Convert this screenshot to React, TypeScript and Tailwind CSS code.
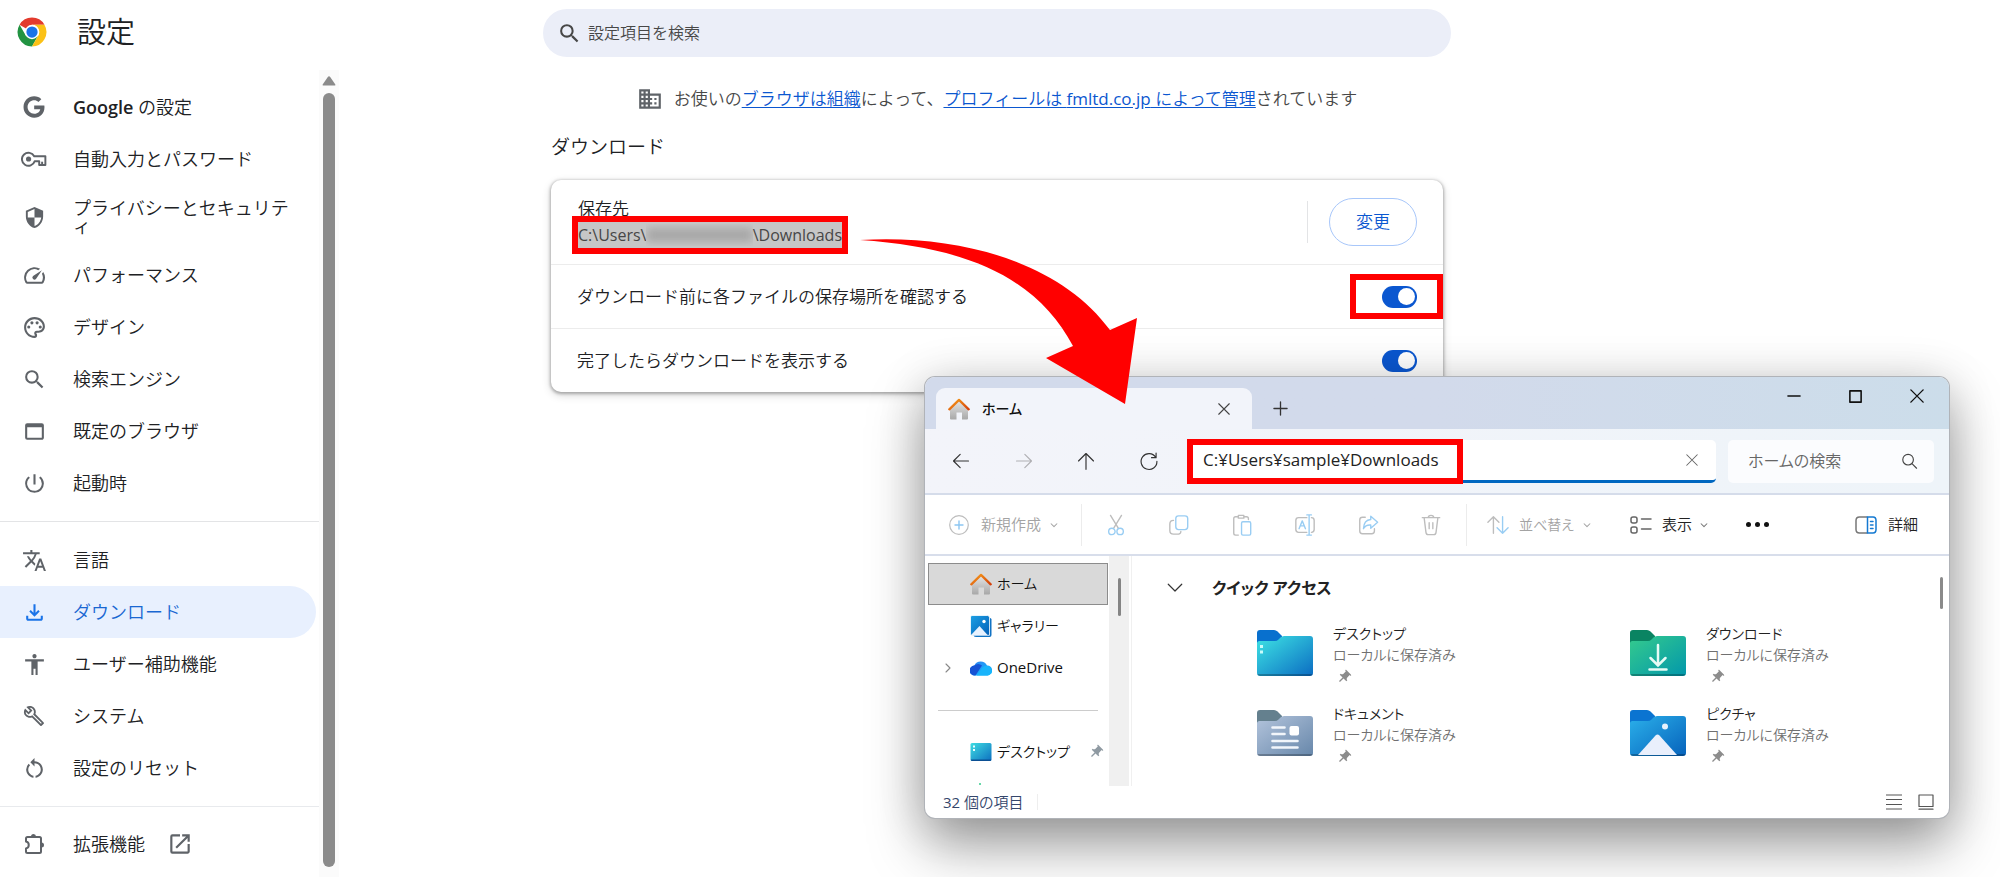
import React from "react";
import { FaGoogle } from "react-icons/fa";
import {
  MdAccessibility,
  MdBusiness,
  MdOpenInNew,
  MdOutlineBuild,
  MdOutlineFileDownload,
  MdOutlinePalette,
  MdOutlineSpeed,
  MdPowerSettingsNew,
  MdPushPin,
  MdRestartAlt,
  MdSearch,
  MdSecurity,
  MdTranslate,
  MdWebAsset,
} from "react-icons/md";

type Node = React.ReactNode;

function ChromeLogo() {
  return (
    <svg viewBox="0 0 48 48" className="size-[30px]" aria-hidden="true">
      <path d="M24 24 4.08 12.5A23 23 0 0 1 43.92 12.5H24Z" fill="#e33b2e" />
      <path d="M4.08 12.5A23 23 0 0 0 24 47L33.96 29.75 24 24 14.04 29.75Z" fill="#229342" />
      <path d="M43.92 12.5A23 23 0 0 1 24 47L33.96 29.75A11.5 11.5 0 0 0 24 12.5Z" fill="#fbc116" />
      <circle cx="24" cy="24" r="11.5" fill="#fff" />
      <circle cx="24" cy="24" r="9" fill="#1a73e8" />
    </svg>
  );
}

function ExtensionIcon() {
  return (
    <svg viewBox="0 0 24 24" className="size-6" aria-hidden="true">
      <path
        d="M4 6.5Q4 5 5.5 5H17.5Q19 5 19 6.5V19.5Q19 21 17.5 21H5.5Q4 21 4 19.5V16.5A3.6 3.6 0 0 0 4 9.5Z"
        fill="none"
        stroke="currentColor"
        strokeWidth="2"
        strokeLinejoin="round"
      />
      <path d="M9 4.5A2.5 2.5 0 0 1 14 4.5ZM19.5 10.5A2.5 2.5 0 0 1 19.5 15.5Z" fill="currentColor" />
    </svg>
  );
}

function KeyIcon() {
  return (
    <svg viewBox="0 0 24 24" className="size-[26px]" fill="none" stroke="currentColor" strokeWidth="1.8" strokeLinejoin="round" aria-hidden="true">
      <path d="M12.2 9.5H22.5V17.5H16.8V14H12.6A6 6 0 1 1 12.2 9.5Z" />
      <circle cx="7" cy="12" r="2.4" fill="currentColor" stroke="none" />
      <path d="M19.5 17.5V14.5" />
    </svg>
  );
}

function NavItem({ icon, children, active = false, trailing, tall = false }: { icon: Node; children: Node; active?: boolean; trailing?: Node; tall?: boolean }) {
  return (
    <a
      href="#"
      aria-current={active ? "page" : undefined}
      className={
        "flex items-center gap-[26px] pl-[21px] pr-5 mr-[3px] rounded-r-full text-lg leading-[18px] " +
        (tall ? "h-16 " : "h-[52px] ") +
        (active ? "bg-[#e8f0fe] text-[#1967d2]" : "text-[#202124]")
      }
    >
      <span className={"flex size-[26px] shrink-0 items-center justify-center text-[25px] " + (active ? "text-[#1a73e8]" : "text-[#5f6368]")}>{icon}</span>
      <span className="break-all">{children}</span>
      {trailing}
    </a>
  );
}

function Sidebar() {
  return (
    <aside className="flex w-[339px] shrink-0 flex-col">
      <header className="flex h-[70px] items-center gap-[30px] pb-[6px] pl-[17px]">
        <ChromeLogo />
        <h1 className="text-[29px] leading-8 text-[#202124]">設定</h1>
      </header>
      <div className="flex">
        <nav className="flex w-[319px] flex-col pt-[11px] pb-2">
          <NavItem icon={<FaGoogle className="size-[22px]" />}>
            <span className="font-semibold">Google</span> の設定
          </NavItem>
          <NavItem icon={<KeyIcon />}>自動入力とパスワード</NavItem>
          <NavItem icon={<MdSecurity className="size-[23px]" />} tall>
            プライバシーとセキュリティ
          </NavItem>
          <NavItem icon={<MdOutlineSpeed />}>パフォーマンス</NavItem>
          <NavItem icon={<MdOutlinePalette />}>デザイン</NavItem>
          <NavItem icon={<MdSearch />}>検索エンジン</NavItem>
          <NavItem icon={<MdWebAsset />}>既定のブラウザ</NavItem>
          <NavItem icon={<MdPowerSettingsNew />}>起動時</NavItem>
          <hr className="my-3 border-[#e3e4e6]" />
          <NavItem icon={<MdTranslate />}>言語</NavItem>
          <NavItem icon={<MdOutlineFileDownload />} active>
            ダウンロード
          </NavItem>
          <NavItem icon={<MdAccessibility />}>ユーザー補助機能</NavItem>
          <NavItem icon={<MdOutlineBuild className="size-[22px]" />}>システム</NavItem>
          <NavItem icon={<MdRestartAlt />}>設定のリセット</NavItem>
          <hr className="mt-3 mb-[11px] border-[#e8eaed]" />
          <NavItem icon={<ExtensionIcon />} trailing={<MdOpenInNew className="-ml-[4px] size-[26px] text-[#5f6368]" />}>
            拡張機能
          </NavItem>
        </nav>
        <div className="flex w-5 flex-col items-center bg-[#fbfbfb] pt-[6px] pb-[11px]">
          <svg viewBox="0 0 14 10" className="mb-[7px] h-[10px] w-[14px]" aria-hidden="true">
            <path d="M1.5 9.5H12.5Q14 9.5 13 8L8.2 1Q7 -.5 5.8 1L1 8Q0 9.5 1.5 9.5Z" fill="#8b8b8b" />
          </svg>
          <div className="w-3 grow rounded-full bg-[#8b8b8b]" />
        </div>
      </div>
    </aside>
  );
}

function Toggle({ label }: { label: string }) {
  return (
    <label className="flex cursor-pointer">
      <input type="checkbox" role="switch" defaultChecked aria-label={label} className="peer sr-only" />
      <span className="flex h-[22px] w-[35px] items-center justify-end rounded-full bg-[#0b57d0] pr-[2px]">
        <span className="size-[17px] rounded-full bg-white" />
      </span>
    </label>
  );
}

function SettingsMain() {
  return (
    <main className="min-w-0 grow pt-[9px] pl-[204px]">
      <div className="w-full max-w-[908px]">
        <label className="flex h-12 items-center gap-[6px] rounded-full bg-[#ebeef8] px-[14px]">
          <MdSearch className="size-[25px] text-[#474747]" />
          <input
            type="search"
            aria-label="設定項目を検索"
            placeholder="設定項目を検索"
            className="grow bg-transparent text-base leading-6 outline-none placeholder:text-[#474747]"
          />
        </label>
        <p className="mt-[29px] flex items-center justify-center gap-[11px] text-[17px] leading-[26px] text-[#474747]">
          <MdBusiness className="size-[26px] shrink-0 text-[#5f6368]" />
          <span>
            お使いの
            <a href="#" className="text-[#0b57d0] underline underline-offset-2">ブラウザは組織</a>
            によって、
            <a href="#" className="text-[#0b57d0] underline underline-offset-2">
              プロフィールは <span className="font-normal">fmltd.co.jp</span> によって管理
            </a>
            されています
          </span>
        </p>
        <h2 className="mt-5 ml-2 text-[19px] leading-[30px] text-[#202124]">ダウンロード</h2>
        <section className="mx-2 mt-[18px] rounded-[10px] bg-white text-[17px] text-[#202124] shadow-[0_1px_3px_1px_rgba(0,0,0,0.26),0_3px_10px_rgba(0,0,0,0.16)]">
          <div className="flex h-[84px] items-center justify-between pr-[26px] pl-[27px]">
            <div className="flex flex-col">
              <span className="leading-[26px]">保存先</span>
              <div className="relative flex h-[26px] w-[264px] items-center bg-[#c6c6c6] text-[16px] leading-6 font-normal text-[#474747]">
                <span>C:\Users\</span>
                <span className="h-[22px] grow overflow-hidden bg-[#c9c9c9]">
                  <span className="mt-1 block h-[14px] bg-[#a6a6a6] blur-[5px]" />
                </span>
                <span>\Downloads</span>
                <span className="pointer-events-none absolute -inset-[6px] border-[6px] border-[#f00]" />
              </div>
            </div>
            <div className="flex items-center gap-[21px]">
              <span className="h-[42px] w-px bg-[#e3e4e6]" />
              <button className="h-12 w-[88px] rounded-full border border-[#a8c7fa] text-[17px] text-[#0b57d0]">変更</button>
            </div>
          </div>
          <div className="relative flex h-16 items-center justify-between border-t border-[#ececec] px-[26px]">
            <span>ダウンロード前に各ファイルの保存場所を確認する</span>
            <Toggle label="ダウンロード前に各ファイルの保存場所を確認する" />
            <span className="pointer-events-none absolute top-[9px] right-0 h-[45px] w-[93px] border-[6px] border-[#f00]" />
          </div>
          <div className="flex h-16 items-center justify-between border-t border-[#ececec] px-[26px]">
            <span>完了したらダウンロードを表示する</span>
            <Toggle label="完了したらダウンロードを表示する" />
          </div>
        </section>
      </div>
    </main>
  );
}

/* ---------- Explorer icons ---------- */

function Line({ d, className = "", w = 1.2, box = 24 }: { d: string; className?: string; w?: number; box?: number }) {
  return (
    <svg viewBox={`0 0 ${box} ${box}`} className={"shrink-0 " + className} fill="none" stroke="currentColor" strokeWidth={w} strokeLinecap="round" strokeLinejoin="round" aria-hidden="true">
      <path d={d} />
    </svg>
  );
}

function TwoTone({ gray, blue }: { gray: string; blue: string }) {
  return (
    <svg viewBox="0 0 24 24" className="size-[22px]" fill="none" strokeWidth="1.5" strokeLinecap="round" strokeLinejoin="round" aria-hidden="true">
      <path d={gray} stroke="#bdbdbd" />
      <path d={blue} stroke="#99cdf3" />
    </svg>
  );
}

function HouseIcon() {
  return (
    <svg viewBox="0 0 22 22" className="size-[22px] shrink-0" aria-hidden="true">
      <defs>
        <linearGradient id="wall" x1="0" y1="0" x2="0" y2="1">
          <stop offset="0" stopColor="#e6e6e6" />
          <stop offset="1" stopColor="#a8a8a8" />
        </linearGradient>
        <linearGradient id="roof" x1="0" y1="0" x2="1" y2="1">
          <stop offset="0" stopColor="#f7a01c" />
          <stop offset="1" stopColor="#d43f0b" />
        </linearGradient>
      </defs>
      <path d="M2 11 11 2.5 20 11V20.5Q20 21.5 19 21.5H14V14.5H8.5V21.5H3Q2 21.5 2 20.5Z" fill="url(#wall)" />
      <path d="M1.3 11.3 11 1.9 20.7 11.3" fill="none" stroke="url(#roof)" strokeWidth="2.3" strokeLinecap="round" strokeLinejoin="round" />
    </svg>
  );
}

function GalleryIcon() {
  return (
    <svg viewBox="0 0 22 22" className="size-[22px] shrink-0" aria-hidden="true">
      <defs>
        <linearGradient id="gal" x1="0" y1="0" x2="1" y2="1">
          <stop offset="0" stopColor="#1ca0e4" />
          <stop offset="1" stopColor="#0460b8" />
        </linearGradient>
      </defs>
      <path d="M4 3H20Q21.5 3 21.5 4.5V20Q21.5 22 19.5 22H6Q3.5 22 3.5 20Z" fill="#1273c4" />
      <path d="M2 .5H17.5Q19.5 .5 19.5 2.5V20.3H2Q.5 20.3 .5 19V2Q.5 .5 2 .5Z" fill="url(#gal)" stroke="#fff" strokeWidth=".8" />
      <circle cx="14" cy="6.5" r="1.7" fill="#fff" />
      <path d="M1.5 19.5 9.5 11 17.5 20H2Z" fill="#e8f2ff" />
    </svg>
  );
}

function CloudIcon() {
  return (
    <svg viewBox="0 0 22 16" className="h-4 w-[22px] shrink-0" aria-hidden="true">
      <defs>
        <linearGradient id="cl" x1="0" y1="0" x2="1" y2="1">
          <stop offset="0" stopColor="#2f7df0" />
          <stop offset="1" stopColor="#0dc0ff" />
        </linearGradient>
      </defs>
      <path d="M5 15.5A5 5 0 0 1 4.3 5.5 7 7 0 0 1 17 5.5 5 5 0 0 1 17.5 15.5Z" fill="url(#cl)" />
      <path d="M5 15.5A5 5 0 0 1 4.3 5.5 6 6 0 0 1 12 5.5L5.5 15.5Z" fill="#1653d4" />
      <path d="M6.5 15.5 12.5 7.5Q15 5 18 6A5 5 0 0 1 17.5 15.5Z" fill="#19b4fb" />
    </svg>
  );
}

function MiniDesktopIcon() {
  return (
    <svg viewBox="0 0 22 18" className="h-[18px] w-[22px] shrink-0" aria-hidden="true">
      <defs>
        <linearGradient id="mini" x1="0" y1="0" x2="1" y2="1">
          <stop offset="0" stopColor="#3fdde2" />
          <stop offset="1" stopColor="#0d6fc0" />
        </linearGradient>
      </defs>
      <rect x=".5" width="21" height="18" rx="1.5" fill="url(#mini)" />
      <path d="M1 16.5H21V17Q21 18 20 18H2Q1 18 1 17Z" fill="#0b4f93" />
      <path d="M3 2.5h2v2h-2zM3 6h2v2h-2z" fill="#e9ffff" />
    </svg>
  );
}

function FolderIcon({ id, tab, from, to, children }: { id: string; tab: string; from: string; to: string; children: Node }) {
  return (
    <svg viewBox="0 0 56 46" className="h-[46px] w-14 shrink-0" aria-hidden="true">
      <defs>
        <linearGradient id={id} x1="0" y1="0" x2="1" y2="1">
          <stop offset="0" stopColor={from} />
          <stop offset="1" stopColor={to} />
        </linearGradient>
      </defs>
      <path d="M0 3Q0 0 3 0H17Q19 0 20.5 1.5L25 6V14H0Z" fill={tab} />
      <path d="M0 13.5Q0 11 2.5 11H18Q20 11 21.5 9.5L23.5 7.5Q25 6 27 6H53Q56 6 56 9V43Q56 46 53 46H3Q0 46 0 43Z" fill={`url(#${id})`} />
      <path d="M.5 44Q1 46 3 46H53Q55 46 55.5 44Z" fill="#000" opacity=".25" />
      {children}
    </svg>
  );
}

const folders = [
  {
    name: "デスクトップ",
    icon: (
      <FolderIcon id="fd" tab="#0870ce" from="#3ee4e4" to="#0b6cc2">
        <path d="M3 15h3v3h-3zM3 20.5h3v3h-3z" fill="#c9fbfb" />
      </FolderIcon>
    ),
  },
  {
    name: "ダウンロード",
    icon: (
      <FolderIcon id="fw" tab="#0a8462" from="#35cb8d" to="#0297ab">
        <path d="M28 15V35M20.5 28 28 35.5 35.5 28M19.5 39.5H36.5" fill="none" stroke="#e6fbf5" strokeWidth="2.5" strokeLinecap="round" />
      </FolderIcon>
    ),
  },
  {
    name: "ドキュメント",
    icon: (
      <FolderIcon id="fo" tab="#64808e" from="#b3c4dc" to="#6787aa">
        <path d="M15.5 17.5H27.5M15.5 24H27.5M15.5 31H40.5M15.5 37.5H40.5" stroke="#f2f6fb" strokeWidth="2.6" strokeLinecap="round" />
        <rect x="32.5" y="16" width="9.5" height="9.5" rx="2" fill="#fff" />
      </FolderIcon>
    ),
  },
  {
    name: "ピクチャ",
    icon: (
      <FolderIcon id="fp" tab="#0b74d1" from="#2bb0ea" to="#0662bb">
        <circle cx="35" cy="16.5" r="3" fill="#e6f2fd" />
        <path d="M8 45 25.5 25.5Q27.5 23.3 29.5 25.5L47 45Z" fill="#e9effc" />
      </FolderIcon>
    ),
  },
];

function ToolButton({ label, children }: { label: string; children: Node }) {
  return (
    <button disabled aria-label={label} className="flex w-[63px] justify-center">
      {children}
    </button>
  );
}

const chevronDown = "M5 9 12 16 19 9";

function TitleBar() {
  return (
    <div className="flex h-[52px] bg-linear-to-r from-[#d2daeb] via-[#d2daeb] to-[#ccddea] pl-[11px]">
      <div className="mt-[11px] flex w-[316px] items-center rounded-t-[9px] bg-[#f2f4fa] pr-[21px] pl-3">
        <HouseIcon />
        <span className="ml-3 grow text-sm font-medium text-[#111]">ホーム</span>
        <button aria-label="タブを閉じる">
          <Line d="M2 2 14 14M14 2 2 14" box={16} w={1.3} className="size-[14px] text-[#444]" />
        </button>
      </div>
      <button aria-label="新しいタブ" className="mt-[11px] ml-[21px] flex items-center text-[#333]">
        <Line d="M8 1V15M1 8H15" box={16} w={1.4} className="size-[15px]" />
      </button>
      <div className="ml-auto flex h-[38px] items-center gap-[47px] pr-[25px] text-[#111]">
        <button aria-label="最小化"><Line d="M1 8H15" box={16} w={1.5} className="size-[14px]" /></button>
        <button aria-label="最大化"><Line d="M2 2H14V14H2Z" box={16} w={1.7} className="size-[15px]" /></button>
        <button aria-label="閉じる"><Line d="M1 1 15 15M15 1 1 15" box={16} w={1.6} className="size-[14px]" /></button>
      </div>
    </div>
  );
}

function NavigationBar() {
  return (
    <div className="flex h-[66px] items-center border-b-2 border-[#d5dcea] bg-linear-to-r from-[#f3f4fa] to-[#eef4f9] pr-[15px] pl-[4px]">
      <div className="flex text-[#333]">
        <button aria-label="戻る" className="flex w-[63px] justify-center"><Line d="M21 12H3M11 4 3 12 11 20" w={1.4} className="size-5" /></button>
        <button aria-label="進む" disabled className="flex w-[63px] justify-center text-[#b0b0b4]"><Line d="M3 12H21M13 4 21 12 13 20" w={1.4} className="size-5" /></button>
        <button aria-label="上へ" className="flex w-[62px] justify-center"><Line d="M12 22V3M3 12 12 3 21 12" w={1.4} className="size-5" /></button>
        <button aria-label="更新" className="flex w-[63px] justify-center"><Line d="M20 7.5A9.5 9.5 0 1 0 21.5 12.5M20.5 2.5V8H15" w={1.4} className="size-5" /></button>
      </div>
      <div className="relative ml-[7px] flex h-[43px] grow items-center rounded-[5px] border-b-[3px] border-[#0067c0] bg-white pr-[17px] pl-4">
        <input aria-label="アドレス" defaultValue="C:¥Users¥sample¥Downloads" className="min-w-0 grow bg-transparent text-[17px] font-normal text-[#222] outline-none" />
        <button aria-label="クリア"><Line d="M2 2 14 14M14 2 2 14" box={16} className="size-[14px] text-[#666]" /></button>
        <span className="pointer-events-none absolute -top-px left-0 h-[45px] w-[276px] border-[6px] border-[#f00]" />
      </div>
      <label className="ml-3 flex h-[43px] w-[206px] items-center rounded-[5px] bg-[#fbfcfe] pr-4 pl-5">
        <input aria-label="ホームの検索" placeholder="ホームの検索" className="w-full min-w-0 bg-transparent text-base outline-none placeholder:text-[#666]" />
        <Line d="M10 2A7.5 7.5 0 1 1 10 17 7.5 7.5 0 0 1 10 2ZM15.5 15 22 21.5" w={1.6} className="size-[17px] text-[#444]" />
      </label>
    </div>
  );
}

function Toolbar() {
  return (
    <div className="flex h-[61px] items-center border-b-2 border-[#d8deeb] bg-white pr-[31px] pl-6 text-[15px] text-[#a3a3a3]">
      <button disabled className="flex items-center">
        <svg viewBox="0 0 20 20" className="size-5" fill="none" strokeWidth="1.2" strokeLinecap="round" aria-hidden="true">
          <circle cx="10" cy="10" r="9.3" stroke="#bdbdbd" />
          <path d="M10 6V14M6 10H14" stroke="#8cc6f2" strokeWidth="1.4" />
        </svg>
        <span className="ml-3">新規作成</span>
        <Line d={chevronDown} w={2.5} className="ml-2 size-[10px]" />
      </button>
      <span className="ml-[22px] h-[42px] w-px bg-[#ececec]" />
      <div className="ml-[2px] flex">
        <ToolButton label="切り取り">
          <TwoTone gray="M6 1.5 14.5 15.5M18 1.5 9.5 15.5" blue="M11 19A3.5 3.5 0 1 1 4 19 3.5 3.5 0 0 1 11 19ZM20 19A3.5 3.5 0 1 1 13 19 3.5 3.5 0 0 1 20 19Z" />
        </ToolButton>
        <ToolButton label="コピー">
          <TwoTone gray="M6 7Q2 7 2 11V18Q2 22 6 22H10Q14 22 14 19" blue="M11.5 2H18.5Q21.5 2 21.5 5V14Q21.5 17 18.5 17H11.5Q8.5 17 8.5 14V5Q8.5 2 11.5 2Z" />
        </ToolButton>
        <ToolButton label="貼り付け">
          <TwoTone gray="M8 23H5Q3 23 3 21V5Q3 3 5 3H7.5M14.5 3H17Q19 3 19 5V6M8 1.5H14V4.5H8Z" blue="M13 8.5H20Q21.5 8.5 21.5 10V21.5Q21.5 23 20 23H13Q11.5 23 11.5 21.5V10Q11.5 8.5 13 8.5Z" />
        </ToolButton>
        <ToolButton label="名前の変更">
          <TwoTone gray="M14 4H5Q2 4 2 7V17Q2 20 5 20H14M19 4Q22 4 22 7V17Q22 20 19 20" blue="M5.5 16 9 7.5 12.5 16M7 13H11M16.5 1V23M14 1H19M14 23H19" />
        </ToolButton>
        <ToolButton label="共有">
          <TwoTone gray="M9 3.5H6Q3 3.5 3 6.5V18.5Q3 21.5 6 21.5H16Q19 21.5 19 18.5V16" blue="M15 2.5 22.5 9 15 15.5V12Q9.5 11.5 7 16 7.5 6.5 15 6Z" />
        </ToolButton>
        <ToolButton label="削除">
          <TwoTone gray="M2.5 4H21.5M9 4Q9 1.5 12 1.5 15 1.5 15 4M4.5 4 6.5 20Q6.8 22.5 9 22.5H15Q17.2 22.5 17.5 20L19.5 4M10 9.5V16M14 9.5V16" blue="" />
        </ToolButton>
      </div>
      <span className="ml-1 h-[42px] w-px bg-[#ececec]" />
      <button disabled className="ml-5 flex items-center">
        <TwoTone gray="M7 21V3M1 9 7 3 13 9" blue="M17 3V21M11 15 17 21 23 15" />
        <span className="ml-[10px] text-sm">並べ替え</span>
        <Line d={chevronDown} w={2.5} className="ml-2 size-[10px]" />
      </button>
      <button className="ml-auto flex items-center text-[#222]">
        <svg viewBox="0 0 22 18" className="h-[18px] w-[22px]" fill="none" stroke="#666" strokeWidth="1.5" strokeLinecap="round" aria-hidden="true">
          <rect x="1" y="1" width="6" height="6" rx="2" />
          <rect x="1" y="11" width="6" height="6" rx="2" />
          <path d="M11.5 3H21M11.5 13H21" />
        </svg>
        <span className="ml-[10px]">表示</span>
        <Line d={chevronDown} w={2.5} className="ml-[7px] size-[10px] text-[#777]" />
      </button>
      <button aria-label="その他" className="ml-[37px] flex gap-1">
        <span className="size-[5px] rounded-full bg-[#111]" />
        <span className="size-[5px] rounded-full bg-[#111]" />
        <span className="size-[5px] rounded-full bg-[#111]" />
      </button>
      <button className="ml-[86px] flex items-center text-[#222]">
        <svg viewBox="0 0 22 18" className="h-[18px] w-[22px]" fill="none" strokeWidth="1.5" strokeLinecap="round" aria-hidden="true">
          <path d="M12 1H4.5Q1 1 1 4.5V13.5Q1 17 4.5 17H12" stroke="#777" />
          <path d="M12.5 1H18Q21 1 21 4.5V13.5Q21 17 18 17H12.5ZM15.5 5.5H18M15.5 9H18M15.5 12.5H18" stroke="#1479d1" />
        </svg>
        <span className="ml-[11px]">詳細</span>
      </button>
    </div>
  );
}

function TreeItem({ icon, children, selected = false, lead, trail }: { icon: Node; children: Node; selected?: boolean; lead?: Node; trail?: Node }) {
  return (
    <a href="#" className={"flex h-[42px] items-center border pr-[3px] text-sm text-[#111] " + (selected ? "border-[#8c8c8c] bg-[#d9d9d9]" : "border-transparent")}>
      <span className="flex w-[41px] justify-center pr-1 text-[#888]">{lead}</span>
      {icon}
      <span className="ml-[5px] grow">{children}</span>
      {trail}
    </a>
  );
}

function ExplorerBody() {
  return (
    <div className="flex h-[230px]">
      <nav className="flex w-[184px] flex-col overflow-hidden pt-[7px] pr-px pl-[3px]">
        <TreeItem icon={<HouseIcon />} selected>ホーム</TreeItem>
        <TreeItem icon={<GalleryIcon />}>ギャラリー</TreeItem>
        <TreeItem icon={<CloudIcon />} lead={<Line d="M8 4 16 12 8 20" w={2.2} className="size-3" />}>
          <span className="text-[15px] font-normal">OneDrive</span>
        </TreeItem>
        <hr className="mx-[10px] mt-[21px] mb-[20px] border-[#ccc]" />
        <TreeItem icon={<MiniDesktopIcon />} trail={<MdPushPin className="size-4 rotate-45 text-[#8f9aa2]" />}>デスクトップ</TreeItem>
        <span className="mt-[10px] ml-[51px] size-[2px] shrink-0 rounded-full bg-[#35cb8d]" />
      </nav>
      <div className="flex w-5 justify-center bg-[#f0f0f0] pt-[22px]">
        <span className="h-[38px] w-[3px] rounded-full bg-[#858585]" />
      </div>
      <div className="ml-[2px] grow border-l border-[#f0f0f0] pr-[6px]">
        <div className="flex">
          <div className="grow pt-4">
            <h3 className="flex h-8 items-center pl-[34px] text-base font-semibold text-[#222]">
              <Line d="M3 7 12 16 21 7" w={1.6} className="mr-[28px] size-[18px] text-[#333]" />
              クイック アクセス
            </h3>
            <div className="mt-[16px] grid grid-cols-[373px_1fr] pl-[125px]">
              {folders.map((f) => (
                <a key={f.name} href="#" className="flex h-20 gap-5">
                  <span className="pt-[10px]">{f.icon}</span>
                  <span className="flex flex-col pt-[3px] text-sm leading-[21px]">
                    <span className="text-[#222]">{f.name}</span>
                    <span className="text-[#707070]">ローカルに保存済み</span>
                    <MdPushPin className="mt-1 ml-[3px] size-4 rotate-45 text-[#8c8c8c]" />
                  </span>
                </a>
              ))}
            </div>
          </div>
          <span className="mt-[21px] h-8 w-[3px] rounded-full bg-[#8a8a8a]" />
        </div>
      </div>
    </div>
  );
}

function StatusBar() {
  return (
    <div className="flex h-8 items-center pr-[15px] pl-[18px] text-[15px] text-[#34466b]">
      <span>
        <span className="font-normal">32</span> 個の項目
      </span>
      <span className="ml-[13px] h-4 w-px bg-[#eee]" />
      <div className="ml-auto flex gap-4 text-[#555]">
        <button aria-label="詳細表示"><Line d="M.5 1H15.5M.5 5.5H15.5M.5 10.5H15.5M.5 15H15.5" box={16} w={1.2} className="size-4" /></button>
        <button aria-label="大アイコン表示"><Line d="M1 1H15V12.5H1ZM1 15.2H15" box={16} w={1.2} className="size-4" /></button>
      </div>
    </div>
  );
}

function ExplorerWindow() {
  return (
    <div
      className="absolute top-[377px] left-[925px] w-[1024px] overflow-hidden rounded-[10px] bg-white [font-feature-settings:'palt'] shadow-[0_0_0_1px_#b0b3b8,0_28px_56px_rgba(0,0,0,0.36),0_4px_48px_rgba(0,0,0,0.16)]"
    >
      <TitleBar />
      <NavigationBar />
      <Toolbar />
      <ExplorerBody />
      <StatusBar />
    </div>
  );
}

export default function App() {
  return (
    <div className="relative min-h-screen overflow-hidden bg-white font-['Open_Sans','Noto_Sans_CJK_JP',sans-serif] font-[350]">
      <div className="flex">
        <Sidebar />
        <SettingsMain />
      </div>
      <ExplorerWindow />
      <svg viewBox="0 0 280 168" className="pointer-events-none absolute top-[237px] left-[859px] h-[168px] w-[280px]" aria-hidden="true">
        <path d="M1 3C101 -3 201 25 251 93L278 81 266 167 187 121 214 109C181 48 121 11 1 3Z" fill="#f00" />
      </svg>
    </div>
  );
}
